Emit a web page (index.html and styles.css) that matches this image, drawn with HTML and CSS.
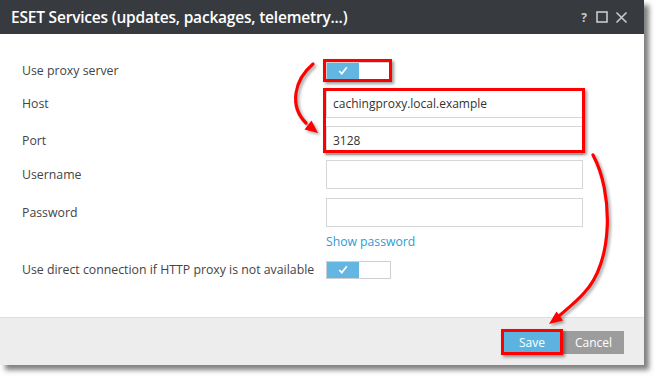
FILE: index.html
```html
<!DOCTYPE html>
<html>
<head>
<meta charset="utf-8">
<link rel="stylesheet" href="styles.css">
</head>
<body>
<div class="dialog">
  <div class="titlebar">
    <div class="title">ESET Services (updates, packages, telemetry...)</div>
    <div class="win-icons">
      <span class="help">?</span>
      <svg class="ico" width="12" height="12" viewBox="0 0 12 12"><rect x="1" y="1" width="10" height="10" fill="none" stroke="#c8cacc" stroke-width="1.6"/></svg>
      <svg class="ico" width="13" height="13" viewBox="0 0 13 13"><path d="M1.5 1.5 L11.5 11.5 M11.5 1.5 L1.5 11.5" stroke="#c8cacc" stroke-width="1.6" fill="none"/></svg>
    </div>
  </div>
  <div class="content">
    <div class="row r1">
      <div class="label">Use proxy server</div>
      <div class="toggle"><span class="on"><svg width="10" height="9" viewBox="0 0 10 9"><path d="M1.2 5 L3.8 7.6 L8.8 1.2" stroke="#fff" stroke-width="1.7" fill="none"/></svg></span></div>
    </div>
    <div class="row r2">
      <div class="label">Host</div>
      <div class="input">cachingproxy.local.example</div>
    </div>
    <div class="row r3">
      <div class="label">Port</div>
      <div class="input">3128</div>
    </div>
    <div class="row r4">
      <div class="label">Username</div>
      <div class="input"></div>
    </div>
    <div class="row r5">
      <div class="label">Password</div>
      <div class="input"></div>
    </div>
    <div class="row r6">
      <div class="label"></div>
      <a class="link">Show password</a>
    </div>
    <div class="row r7">
      <div class="label">Use direct connection if HTTP proxy is not available</div>
      <div class="toggle"><span class="on"><svg width="10" height="9" viewBox="0 0 10 9"><path d="M1.2 5 L3.8 7.6 L8.8 1.2" stroke="#fff" stroke-width="1.7" fill="none"/></svg></span></div>
    </div>
  </div>
  <div class="footer">
    <button class="btn save">Save</button>
    <button class="btn cancel">Cancel</button>
  </div>
</div>

<div class="mark m1"></div>
<div class="mark m2"></div>
<div class="mark m3"></div>

<svg class="arrows" width="660" height="381" viewBox="0 0 660 381">
  <path d="M313 64 C 294 80 289 106 306 123" stroke="#f00" stroke-width="3.2" fill="none" stroke-linecap="round"/>
  <polygon points="318,133 304.5,129.5 311.5,120.5" fill="#f00"/>
  <path d="M593 155 C 613 192 614 262 584 293 C 576 302 567 309 559 316" stroke="#f00" stroke-width="3.2" fill="none" stroke-linecap="round"/>
  <polygon points="549,324 563,320.5 556.5,311.5" fill="#f00"/>
</svg>
</body>
</html>
```

FILE: styles.css
```css
html, body {
  margin: 0;
  padding: 0;
  background: #fff;
}
body {
  width: 660px;
  height: 381px;
  position: relative;
  overflow: hidden;
  font-family: "Open Sans", "Noto Sans", sans-serif;
}
.dialog {
  width: 644px;
  height: 365px;
  background: #fff;
  box-shadow: 5px 5px 5px rgba(0, 0, 0, 0.5);
  display: flex;
  flex-direction: column;
}
.titlebar {
  height: 34px;
  background: #373b40;
  display: flex;
  align-items: center;
  justify-content: space-between;
  padding: 0 16px 0 11px;
  box-sizing: border-box;
}
.title {
  color: #fff;
  font-weight: 600;
  font-size: 15.5px;
  letter-spacing: -0.2px;
}
.win-icons {
  display: flex;
  align-items: center;
  gap: 7px;
}
.help {
  color: #c8cacc;
  font-weight: 700;
  font-size: 12px;
  margin-right: 2px;
}
.content {
  flex: 1;
  padding: 27px 0 0 22px;
  box-sizing: border-box;
}
.row {
  display: flex;
  align-items: center;
}
.label {
  width: 304px;
  flex: none;
  font-size: 12.3px;
  color: #444;
}
.r1 { height: 19px; }
.r2 { height: 29px; margin-top: 9px; }
.r3 { height: 29px; margin-top: 8px; }
.r4 { height: 29px; margin-top: 5px; }
.r5 { height: 29px; margin-top: 9px; }
.r6 { height: 20px; margin-top: 4px; }
.r7 { height: 19px; margin-top: 9px; }
.input {
  width: 257px;
  height: 29px;
  box-sizing: border-box;
  border: 1px solid #d6d6d6;
  padding: 0 6px;
  font-size: 12px;
  color: #333;
  line-height: 27px;
}
.link {
  color: #2f9ad6;
  font-size: 12.2px;
}
.toggle {
  width: 65px;
  height: 18px;
  box-sizing: border-box;
  border: 1px solid #cfcfcf;
  display: flex;
  background: #fff;
}
.toggle .on {
  width: 32px;
  height: 100%;
  background: #64b6e2;
  display: flex;
  align-items: center;
  justify-content: center;
}
.footer {
  height: 48px;
  background: #ededed;
  border-top: 1px solid #dedede;
  box-sizing: border-box;
  display: flex;
  justify-content: flex-end;
  align-items: flex-start;
  padding: 13px 20px 0 0;
  gap: 2px;
}
.btn {
  height: 23px;
  border: none;
  color: #fff;
  font-family: "Open Sans", "Noto Sans", sans-serif;
  font-size: 12px;
  padding: 0;
}
.save {
  width: 58px;
  background: #5cb3df;
}
.cancel {
  width: 61px;
  background: #9c9c9c;
}
.mark {
  position: absolute;
  border: 3px solid #f00;
  box-sizing: border-box;
  box-shadow: 2px 2px 3px rgba(0, 0, 0, 0.4);
}
.m1 { left: 323px; top: 59px; width: 69px; height: 23px; }
.m2 { left: 323px; top: 88px; width: 262px; height: 65px; }
.m3 { left: 501px; top: 329px; width: 62px; height: 26px; }
.arrows {
  position: absolute;
  left: 0;
  top: 0;
  filter: drop-shadow(2px 2px 1.5px rgba(0, 0, 0, 0.35));
}
```
